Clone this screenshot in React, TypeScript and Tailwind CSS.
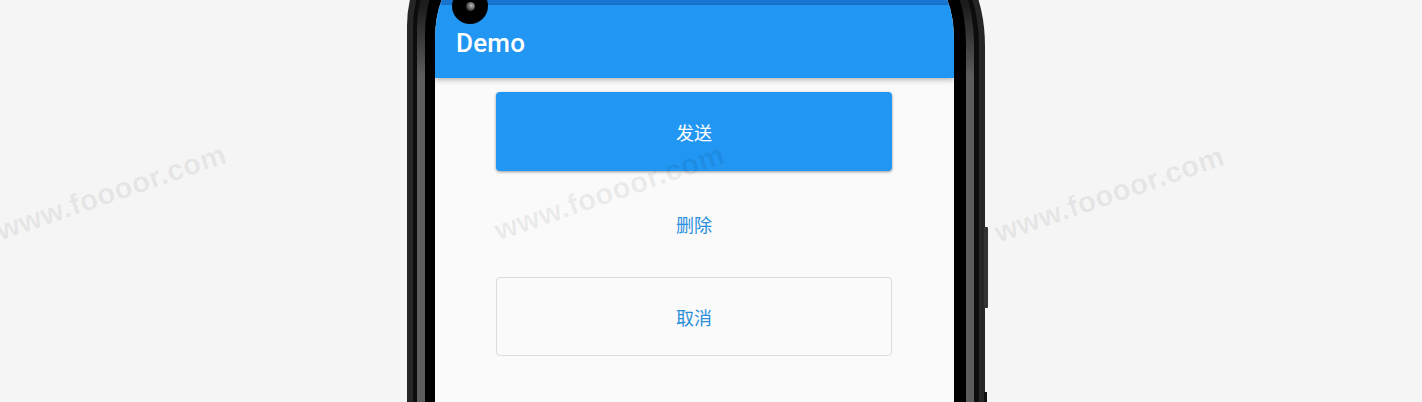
import React from 'react';

const cjk = "font-['Roboto','Noto_Sans_CJK_SC',sans-serif]";

function Watermark({ className }: { className: string }) {
    return (
        <div
            className={`absolute font-['Liberation_Sans',sans-serif] font-bold text-[29px] leading-none tracking-[0.6px] whitespace-nowrap text-black/[0.07] -rotate-[19deg] pointer-events-none ${className}`}
        >
            www.foooor.com
        </div>
    );
}

function Phone() {
    return (
        <div className="relative ml-[407px] w-[578px] h-[460px] -mt-[44px] rounded-tl-[40px_70px] rounded-tr-[46px_90px] pl-[6px] pr-[6px] pt-[6px] bg-[#262626]">
            {/* side buttons */}
            <div className="absolute left-[577px] top-[271px] w-[4px] h-[81px] rounded-r-[1px] bg-[#333333]" />
            <div className="absolute left-[577px] top-[436px] w-[3px] h-[30px] bg-[#111111]" />

            <div className="h-full rounded-tl-[36px_66px] rounded-tr-[40px_84px] pl-[4px] pr-[5px] pt-[4px] bg-[#0c0c0c]">
                <div className="h-full rounded-tl-[32px_62px] rounded-tr-[34px_78px] px-[8px] pt-[8px] bg-[linear-gradient(to_bottom,#1c1c1c_40px,#5c5c5c_110px)]">
                    <div className="h-full rounded-tl-[26px_60px] rounded-tr-[28px_70px] pl-[10px] pr-[12px] pt-[10px] bg-black">
                        <Screen />
                    </div>
                </div>
            </div>
        </div>
    );
}

function Screen() {
    return (
        <div className="relative h-full overflow-hidden rounded-t-[22px_56px] bg-[#fafafa]">
            <div className="h-[21px] bg-[#1976d2]" />
            <div className="relative h-[73px] flex items-center px-[21px] bg-[#2196f3] shadow-[0_2px_5px_rgba(0,0,0,0.28)]">
                <span className={`${cjk} text-white text-[26px] font-medium tracking-[0.2px] mt-[3px]`}>Demo</span>
            </div>
            {/* camera */}
            <div className="absolute left-[17px] top-[4px] w-[36px] h-[36px] rounded-full bg-black flex items-center justify-center">
                <div className="w-[9px] h-[9px] rounded-full bg-[radial-gradient(circle_at_60%_40%,#bbb,#333_70%)]" />
            </div>

            <div className={`${cjk} flex flex-col items-center pt-[14px] pr-[1px] text-[18px]`}>
                <button className="w-[396px] h-[79px] pt-[4px] rounded-[4px] bg-[#2196f3] text-white shadow-[0_1px_3px_rgba(0,0,0,0.4)]">
                    发送
                </button>
                <button className="w-[396px] h-[79px] mt-[14px] pt-[2px] rounded-[4px] text-[#2a8fdc]">
                    删除
                </button>
                <button className="w-[396px] h-[79px] mt-[13px] pt-[4px] rounded-[4px] border border-[#dcdcdc] text-[#2a8fdc]">
                    取消
                </button>
            </div>
        </div>
    );
}

export default function App() {
    return (
        <div className="relative w-[1422px] h-[402px] overflow-hidden bg-[#f5f5f5]">
            <Phone />
            <Watermark className="left-[-9px] top-[178px]" />
            <Watermark className="left-[489px] top-[178px]" />
            <Watermark className="left-[989px] top-[180px]" />
        </div>
    );
}
